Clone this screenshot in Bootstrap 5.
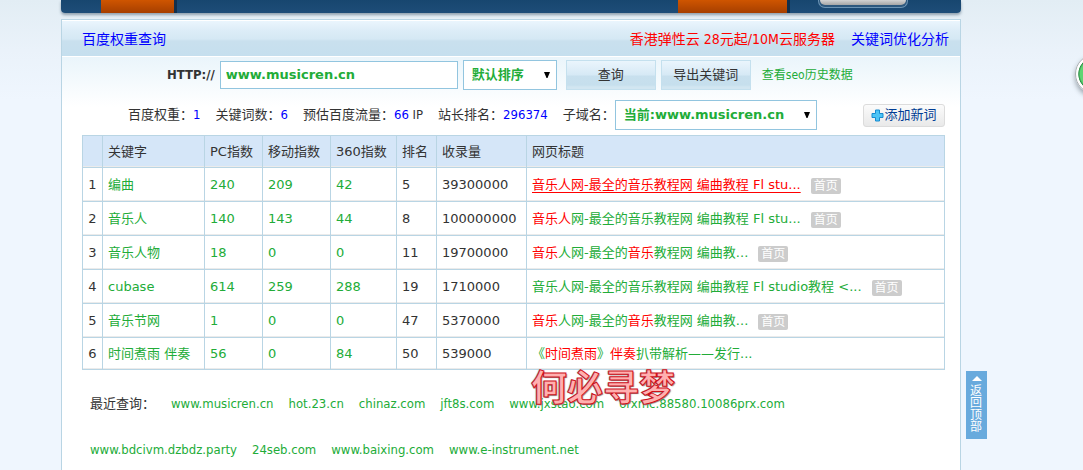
<!DOCTYPE html>
<html lang="zh-CN">
<head>
<meta charset="utf-8">
<meta name="viewport" content="width=device-width, initial-scale=1">
<title>百度权重查询</title>
<link href="https://cdn.jsdelivr.net/npm/bootstrap@5.3.0/dist/css/bootstrap.min.css" rel="stylesheet">
<style>
:root{--line:#b9d5e4;--green:#22ac38;--tahoma:"DejaVu Sans Condensed","Noto Sans CJK SC",sans-serif;--verdana:"DejaVu Sans","Noto Sans CJK SC",sans-serif}
body{font:13px/20px var(--tahoma);color:#333;background:#eff6fe linear-gradient(#e2edf4,#eaf2fa 50px,#eff6fe 100px,#eff6fe) no-repeat;padding-right:61px;overflow-x:hidden}
a{text-decoration:none;color:var(--green)}
a.blue{color:#00f}
a.red{color:#f00}
.page-wrap{max-width:900px}
.topbar{height:13px;background:linear-gradient(#17466f,#1e4d78);border-radius:0 0 4px 4px;box-shadow:0 2px 3px #8fa0ae;overflow:hidden}
.tab-on{background:linear-gradient(#cf5500,#a63f00);border-right:3px solid #12304d;box-sizing:content-box}
.login{height:8px;width:90px;margin-right:53px;border:1px solid #6b93b4;border-top:0;border-radius:0 0 7px 7px;background:#2d587e;padding:0 1px 1px}
.login button{display:block;width:100%;height:5px;border:0;padding:0;border-radius:0 0 5px 5px;background:linear-gradient(#d3d3d3,#a6a6a6);overflow:hidden}
.panel{margin-top:6px;border:1px solid var(--line);background:#fff linear-gradient(#eaf5fb,#fff 50px) no-repeat 0 37px}
.panel-head{height:37px;font-size:14px;padding:0 11px 0 20px;border-top:1px solid #fff;border-bottom:1px solid #fff;background:linear-gradient(#eaf5fd,#dcecf7 10px,#d5e8f4 18px,#c9e0ee 20px,#c5dfee)}
.search-row{padding:2px 0 0 105px;height:33px;gap:5px}
.hist{font-size:12px;margin-left:6px}
.box{border:1px solid #92c5df;border-radius:0;background-color:#fff;color:var(--green);font:bold 13px/20px var(--verdana);outline:0}
input.box{width:238px;height:28px;padding:0 5px}
select.box{appearance:none;height:30px;padding:0 8px;background:#fff url("data:image/svg+xml,%3Csvg xmlns='http://www.w3.org/2000/svg' width='8' height='6'%3E%3Cpath d='M1 0h6L4.500 6h-1z'/%3E%3C/svg%3E") no-repeat right 5px center}
.w-sort{width:94px}
.w-domain{width:202px}
.blue-btn{width:90px;height:30px;padding:0;border:1px solid #c4e0ee;border-radius:0;font-size:13px;color:#333;background:linear-gradient(#eaf5fc,#d6e9f5 14px,#c8e0ee 15px,#c6dfed 24px,#d2e6f1 26px)}
.stats{height:30px;margin:10px 15px 0 66px;gap:15px}
.stats b{font-weight:400;color:#00f}
.add-btn{width:82px;height:23px;padding:0;font-size:13px;line-height:20px;color:#003c94;border:1px solid #dcdcdc;border-radius:3px;background:linear-gradient(#fbfbfb,#e9e9e9)}
.words{margin:5px 15px 0 20px;font:13px/20px var(--verdana)}
.words table{width:100%;table-layout:fixed;border-collapse:collapse;background:#fff}
.words th,.words td{border:1px solid var(--line);height:34px;padding:0 5px;font-weight:400;white-space:nowrap;box-shadow:inset 0 -1px #ebebeb}
.words th{height:32px;background:#d5e6f8}
.words tr:last-child td{height:32px}
.words td:first-child{text-align:center;padding:0}
.words td:nth-child(n+3):nth-child(-n+5){color:var(--green)}
.words em{font-style:normal;color:#f00}
.words a.hovered{color:#f00;text-decoration:underline;text-underline-offset:3px}
.home{display:inline-block;width:30px;height:16px;margin-left:10px;border-radius:2px;background:#ccc;color:#fff;font-size:12px;line-height:16px;text-align:center;vertical-align:-1px}
.recent{margin:24px 120px 10px 28px;gap:26px 15px}
.recent span{margin-right:1px}
.watermark{left:441px;top:-31px;font:bold 36px/44px "Noto Sans CJK SC",sans-serif;color:#ffb0b0;-webkit-text-stroke:1px #d0101a;text-shadow:1px 1px 1px #777,-1px 0 1px #999;pointer-events:none;white-space:nowrap}
.to-top{left:905px;top:371px;width:21px;height:68px;background:#68aadd;color:#fff;font-size:12px;line-height:12px;padding:5px 4px}
.to-top svg{display:block;margin:0 auto 4px}
.bubble{left:1075px;top:54px;width:40px;height:40px;padding:0;border-radius:50%;border:1px solid #a9adb1;background:radial-gradient(closest-side,#5fd573 78%,#2f8f49 86%,#fff 90%);box-shadow:0 3px 5px #9aa4ad}
</style>
<script src="https://cdn.jsdelivr.net/npm/bootstrap@5.3.0/dist/js/bootstrap.bundle.min.js"></script>
</head>
<body>
<div class="page-wrap mx-auto position-relative min-vh-100 d-flex flex-column">
  <nav class="topbar d-flex" aria-label="主导航">
      <div style="width:4.45%"></div><div class="tab-on" style="width:8.1%"></div>
      <div style="width:55.7%"></div><div class="tab-on" style="width:12.1%"></div>
      <div class="ms-auto login"><button type="button" aria-label="登录"></button></div>
  </nav>
  <main class="panel flex-grow-1">
    <header class="panel-head d-flex align-items-center">
      <a class="blue me-auto" href="#">百度权重查询</a>
      <a class="red" href="#">香港弹性云 28元起/10M云服务器</a>
      <a class="blue ms-3" href="#">关键词优化分析</a>
    </header>
    <form class="search-row d-flex align-items-center">
      <label class="fw-bold" for="site">HTTP://</label>
      <input class="box" id="site" value="www.musicren.cn">
      <select class="box w-sort me-1" aria-label="排序"><option>默认排序</option></select>
      <button class="btn blue-btn" type="button">查询</button>
      <button class="btn blue-btn" type="button">导出关键词</button>
      <a class="hist" href="#">查看seo历史数据</a>
    </form>
    <div class="stats d-flex align-items-center">
      <span>百度权重：<b>1</b></span><span>关键词数：<b>6</b></span><span>预估百度流量：<b>66</b> IP</span><span>站长排名：<b>296374</b></span>
      <div class="d-flex align-items-center"><label for="domain">子域名：</label><select class="box w-domain" id="domain"><option>当前:www.musicren.cn</option></select></div>
      <button class="btn add-btn ms-auto d-flex align-items-center justify-content-center" type="button"><svg width="13" height="13" viewBox="0 0 13 13" aria-hidden="true"><path d="M4.500 1h4v3.500H12v4H8.500V12h-4V8.500H1v-4h3.500z" fill="#4cc4f5" stroke="#168bd0"/></svg>添加新词</button>
    </div>
    <div class="words">
      <table>
        <colgroup><col style="width:20px"><col style="width:102px"><col style="width:58px"><col style="width:68px"><col style="width:66px"><col style="width:40px"><col style="width:90px"><col></colgroup>
        <thead><tr><th></th><th>关键字</th><th>PC指数</th><th>移动指数</th><th>360指数</th><th>排名</th><th>收录量</th><th>网页标题</th></tr></thead>
        <tbody>
        <tr><td>1</td><td><a href="#">编曲</a></td><td>240</td><td>209</td><td>42</td><td>5</td><td>39300000</td><td><a class="hovered" href="#">音乐人网-最全的音乐教程网 编曲教程 Fl stu...</a><span class="home">首页</span></td></tr>
        <tr><td>2</td><td><a href="#">音乐人</a></td><td>140</td><td>143</td><td>44</td><td>8</td><td>100000000</td><td><a href="#"><em>音乐人</em>网-最全的音乐教程网 编曲教程 Fl stu...</a><span class="home">首页</span></td></tr>
        <tr><td>3</td><td><a href="#">音乐人物</a></td><td>18</td><td>0</td><td>0</td><td>11</td><td>19700000</td><td><a href="#"><em>音乐</em>人网-最全的<em>音乐</em>教程网 编曲教...</a><span class="home">首页</span></td></tr>
        <tr><td>4</td><td><a href="#">cubase</a></td><td>614</td><td>259</td><td>288</td><td>19</td><td>1710000</td><td><a href="#">音乐人网-最全的音乐教程网 编曲教程 Fl studio教程 &lt;...</a><span class="home">首页</span></td></tr>
        <tr><td>5</td><td><a href="#">音乐节网</a></td><td>1</td><td>0</td><td>0</td><td>47</td><td>5370000</td><td><a href="#"><em>音乐</em>人网-最全的<em>音乐</em>教程网 编曲教...</a><span class="home">首页</span></td></tr>
        <tr><td>6</td><td><a href="#">时间煮雨 伴奏</a></td><td>56</td><td>0</td><td>84</td><td>50</td><td>539000</td><td><a href="#">《<em>时间煮雨</em>》<em>伴奏</em>扒带解析——发行...</a></td></tr>
        </tbody>
      </table>
    </div>
    <div class="recent position-relative d-flex flex-wrap">
      <span>最近查询：</span>
      <a href="#">www.musicren.cn</a>
      <a href="#">hot.23.cn</a>
      <a href="#">chinaz.com</a>
      <a href="#">jft8s.com</a>
      <a href="#">www.jxstao.com</a>
      <a href="#">orxmc.88580.10086prx.com</a>
      <a href="#">www.bdcivm.dzbdz.party</a>
      <a href="#">24seb.com</a>
      <a href="#">www.baixing.com</a>
      <a href="#">www.e-instrument.net</a>
      <div class="watermark position-absolute">何必寻梦</div>
    </div>
  </main>
  <a class="to-top position-absolute" href="#"><svg width="10" height="5" viewBox="0 0 10 5" aria-hidden="true"><path d="M5 0l5 5H0z" fill="#fff"/></svg>返回顶部</a>
</div>
<button class="bubble position-fixed" type="button" aria-label="助手"></button>
</body>
</html>
